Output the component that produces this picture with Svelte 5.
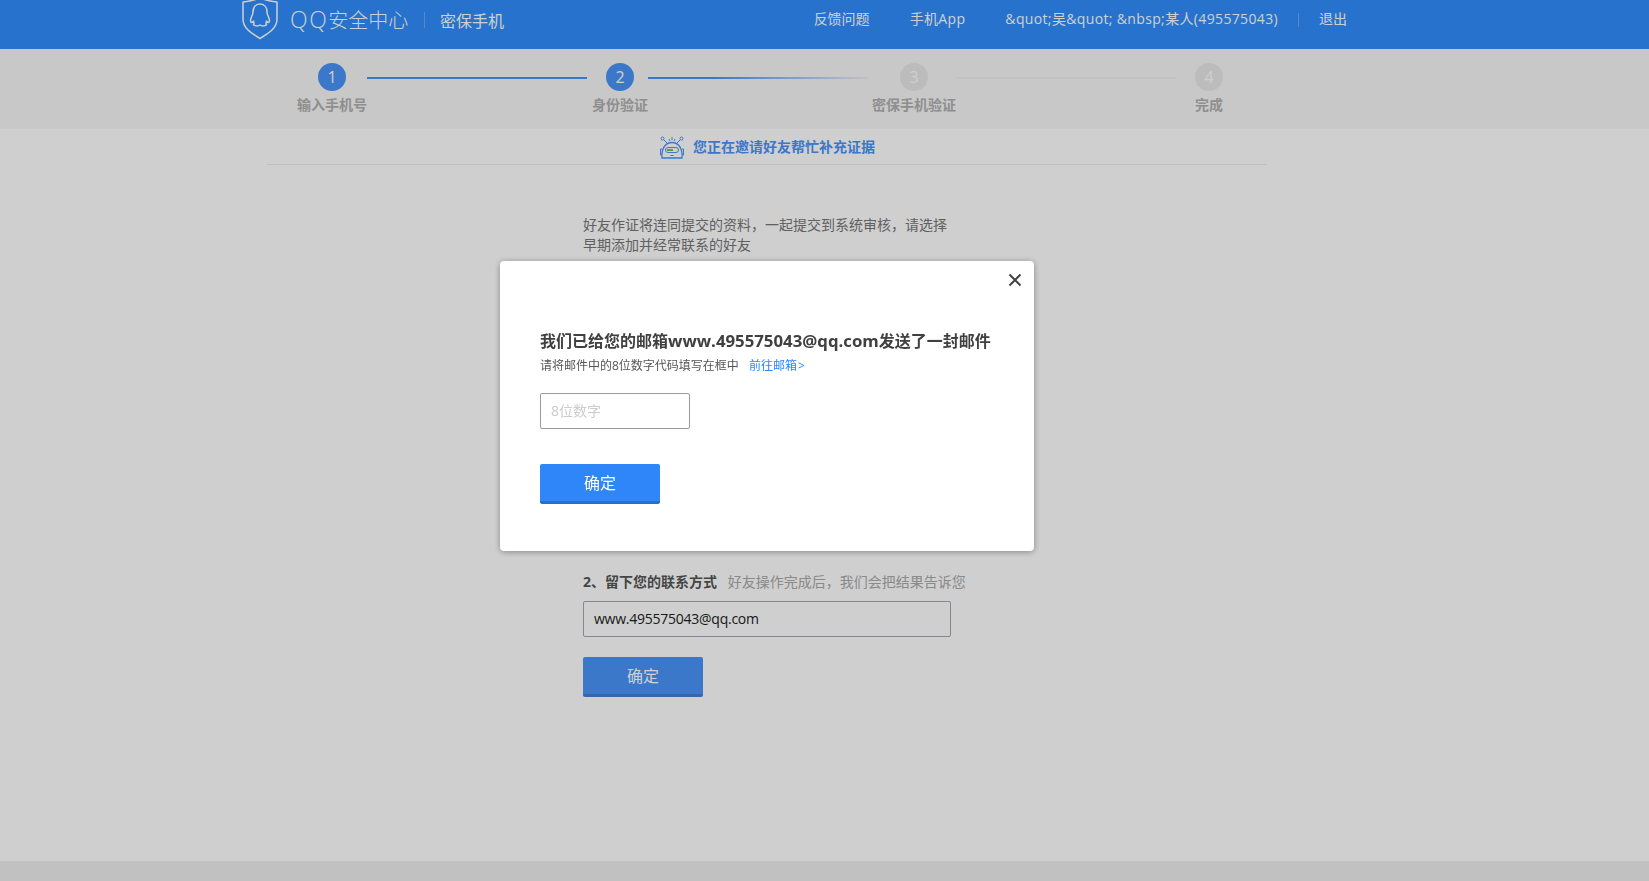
<script>
  const nav = ['反馈问题', '手机App', '&quot;吴&quot; &nbsp;某人(495575043)'];
</script>

<div class="page">
  <header class="top">
    <div class="top-inner">
      <div class="brand">
        <svg class="shield" width="38" height="42" viewBox="0 0 38 42" fill="none" stroke="#fff" stroke-width="1.5" stroke-linejoin="round">
          <path d="M2 3Q11 2 19 -1Q27 2 36 3V20C36 30 26 35 19 39.5C12 35 2 30 2 20Z" />
          <path d="M19 5C14 5 12 9 12 13C12 15 11.5 16 10.5 18C9.5 20 9 23 10.5 23.5C11.5 23.8 12 22.5 12.5 22C13 24 13.5 25 12.5 25.5C13 27 17 27.5 19 26C21 27.5 25 27 25.5 25.5C24.5 25 25 24 25.5 22C26 22.5 26.5 23.8 27.5 23.5C29 23 28.5 20 27.5 18C26.5 16 26 15 26 13C26 9 24 5 19 5Z" />
        </svg>
        <span class="brand-name"><span class="qq">QQ</span>安全中心</span>
        <span class="brand-sep"></span>
        <span class="brand-sub">密保手机</span>
      </div>
      <nav class="nav">
        {#each nav as item}
          <span class="nav-item">{item}</span>
        {/each}
        <span class="nav-sep"></span>
        <span class="nav-exit">退出</span>
      </nav>
    </div>
  </header>

  <section class="steps">
    <div class="step">
      <span class="dot on">1</span>
      <span class="label">输入手机号</span>
    </div>
    <span class="line on"></span>
    <div class="step s2">
      <span class="dot on">2</span>
      <span class="label">身份验证</span>
    </div>
    <span class="line fade"></span>
    <div class="step s3">
      <span class="dot">3</span>
      <span class="label">密保手机验证</span>
    </div>
    <span class="line"></span>
    <div class="step s4">
      <span class="dot">4</span>
      <span class="label">完成</span>
    </div>
  </section>

  <main class="main">
    <div class="wrap">
      <div class="title-row">
        <svg class="robot" width="26" height="25" viewBox="0 0 26 25" fill="none" stroke="#4b94f8" stroke-width="1">
          <circle cx="3.5" cy="3.5" r="1.5" />
          <circle cx="22.5" cy="3.5" r="1.5" />
          <path d="M5 5L8 8M21 5L18 8M10 4L11 6M16 4L15 6M13 2V5" />
          <path d="M3 23C2 13 7 7.500 13 7.500C19 7.500 24 13 23 23Z" stroke-width="1.3" />
          <path d="M3 14H1.500V20H3M23 14H24.500V20H23" />
          <rect x="6.500" y="12.500" width="13" height="5" rx="2.500" />
          <rect x="8" y="14" width="6" height="2" fill="#7cc04a" stroke="none" />
          <path d="M11.500 20.500H14.500" />
        </svg>
        <span>您正在邀请好友帮忙补充证据</span>
      </div>

      <div class="form">
        <p class="intro">好友作证将连同提交的资料，一起提交到系统审核，请选择<br />早期添加并经常联系的好友</p>
        <div class="contact-head">
          <b>2、留下您的联系方式</b>
          <span>好友操作完成后，我们会把结果告诉您</span>
        </div>
        <input class="contact" value="www.495575043@qq.com" />
        <button class="btn back">确定</button>
      </div>
    </div>
  </main>

  <footer class="foot"></footer>
</div>

<div class="overlay">
  <div class="modal">
    <svg class="close" width="14" height="14" viewBox="0 0 14 14" stroke="#444" stroke-width="2">
      <path d="M1.500 1.500L12.500 12.500M12.500 1.500L1.500 12.500" />
    </svg>
    <h2>我们已给您的邮箱<span class="mail">www.495575043@qq.com</span>发送了一封邮件</h2>
    <p class="sub">请将邮件中的8位数字代码填写在框中<a href="#mail">前往邮箱<span class="gt">&gt;</span></a></p>
    <input class="code" placeholder="8位数字" />
    <button class="btn primary">确定</button>
  </div>
</div>

<style>
  :global(body) {
    margin: 0;
    background: #fff;
    font-family: "Open Sans", "Noto Sans CJK SC", sans-serif;
    font-size: 14px;
  }
  .page {
    display: flex;
    flex-direction: column;
    min-height: 100vh;
    box-sizing: border-box;
  }
  .top {
    height: 49px;
    background: #308dfc;
    color: #fff;
  }
  .top-inner {
    display: flex;
    justify-content: space-between;
    width: 1106px;
    margin-left: 241px;
    height: 40px;
    align-items: center;
  }
  .brand, .nav { display: flex; align-items: center; }
  .brand { margin-top: -1px; }
  .shield { flex: none; overflow: visible; margin-top: 1px; }
  .brand-name {
    margin-left: 11px;
    font-size: 20px;
    font-weight: 300;
    width: 117px;
    white-space: nowrap;
  }
  .qq { font-size: 23px; line-height: 20px; letter-spacing: 1.6px; }
  .brand-sep {
    width: 1px;
    height: 16px;
    margin-left: 17px;
    background: #6ea9f0;
  }
  .brand-sub {
    margin-left: 15px;
    font-size: 16px;
  }
  .nav { margin-top: -4px; }
  .nav-item { margin-left: 40px; white-space: nowrap; letter-spacing: 0.35px; }
  .nav-item:first-child { letter-spacing: 0; }
  .nav-sep {
    width: 1px;
    height: 14px;
    margin: 4px 20px 0;
    background: #6ea9f0;
  }
  .steps {
    display: flex;
    height: 80px;
    padding: 14px 0 0 297px;
    box-sizing: border-box;
    background: #f7f7f7;
  }
  .step {
    display: flex;
    flex-direction: column;
    align-items: center;
  }
  .s2 { margin-left: 5px; }
  .s3 { margin-left: 4px; }
  .s4 { margin-left: 19px; }
  .dot {
    width: 28px;
    height: 28px;
    border-radius: 50%;
    background: #e8e8e8;
    color: #fff;
    font-size: 16px;
    line-height: 28px;
    text-align: center;
  }
  .dot.on { background: #4b94f8; }
  .label {
    margin-top: 4px;
    line-height: 20px;
    font-weight: 700;
    color: #b0b0b0;
    white-space: nowrap;
  }
  .line {
    width: 220px;
    height: 2px;
    margin-top: 14px;
    background: #efefef;
  }
  .line.on { background: #4b94f8; }
  .line.fade { background: linear-gradient(90deg, #4b94f8 30%, #efefef); }
  .main { flex: 1; }
  .wrap {
    width: 1000px;
    margin-left: 267px;
  }
  .title-row {
    display: flex;
    align-items: center;
    justify-content: center;
    gap: 8px;
    height: 34px;
    padding-bottom: 1px;
    border-bottom: 1px solid #e4eefb;
    color: #4b94f8;
    font-weight: 700;
  }
  .robot { margin-top: 3px; }
  .form { padding-left: 316px; }
  .intro {
    margin: 50px 0 0;
    line-height: 20px;
    color: #777;
  }
  .contact-head {
    margin-top: 317px;
    line-height: 20px;
  }
  .contact-head b { color: #555; }
  .contact-head span { margin-left: 7px; color: #aaa; }
  input {
    display: block;
    box-sizing: border-box;
    height: 36px;
    font: inherit;
    border-radius: 2px;
    outline: none;
    background: #fff;
  }
  .contact {
    width: 368px;
    margin-top: 9px;
    padding: 0 10px 2px;
    border: 1px solid #a5a7ae;
    color: #222;
    letter-spacing: -0.25px;
  }
  .btn {
    display: block;
    box-sizing: border-box;
    width: 120px;
    height: 40px;
    padding: 0 0 2px;
    font: inherit;
    font-size: 16px;
    color: #fff;
    border: 0;
    border-radius: 2px;
  }
  .back {
    margin-top: 20px;
    background: #4b94f8;
    border-bottom: 3px solid #447fd1;
  }
  .foot {
    height: 20px;
    background: #eee;
  }
  .overlay {
    position: fixed;
    inset: 0;
    background: rgba(0, 0, 0, 0.19);
  }
  .modal {
    position: absolute;
    left: 500px;
    top: 261px;
    width: 534px;
    height: 290px;
    padding: 68px 40px 0;
    box-sizing: border-box;
    background: #fff;
    border-radius: 4px;
    box-shadow: 0 1px 6px rgba(0, 0, 0, 0.35);
  }
  .close { position: absolute; left: 508px; top: 12px; }
  h2 {
    margin: 0;
    font-size: 16px;
    font-weight: 700;
    line-height: 24px;
    color: #404040;
    white-space: nowrap;
  }
  .mail { font-size: 16.8px; }
  .sub {
    margin: 4px 0 0;
    font-size: 12px;
    line-height: 18px;
    color: #555;
  }
  .sub a {
    margin-left: 10px;
    color: #2d85fb;
    text-decoration: none;
  }
  .gt { margin-left: 1px; }
  .code {
    width: 150px;
    margin-top: 18px;
    padding: 0 10px 2px;
    border: 1px solid #999ba3;
  }
  .code::placeholder { color: #ccc; opacity: 1; }
  .primary {
    margin-top: 35px;
    background: #2e86f8;
    border-bottom: 3px solid #2a6fc9;
  }
</style>
